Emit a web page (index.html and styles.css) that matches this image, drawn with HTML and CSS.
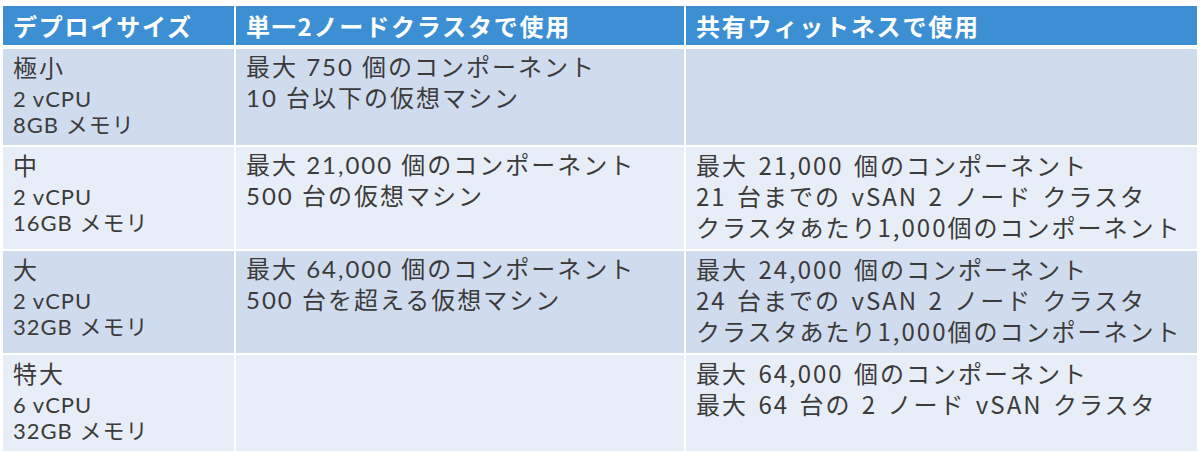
FILE: index.html
```html
<!DOCTYPE html>
<html lang="ja">
<head>
<meta charset="utf-8">
<title>デプロイサイズ</title>
<link rel="stylesheet" href="styles.css">
</head>
<body>
<div class="wrap">
<table class="spec">
  <colgroup>
    <col class="c1"><col class="c2"><col class="c3">
  </colgroup>
  <thead>
    <tr>
      <th>デプロイサイズ</th>
      <th>単一2ノードクラスタで使用</th>
      <th>共有ウィットネスで使用</th>
    </tr>
  </thead>
  <tbody>
    <tr class="odd">
      <td class="size"><div class="name">極小</div><div class="spec-line">2 vCPU</div><div class="spec-line">8GB メモリ</div></td>
      <td class="single"><div>最大 750 個のコンポーネント</div><div>10 台以下の仮想マシン</div></td>
      <td class="shared"></td>
    </tr>
    <tr class="even">
      <td class="size"><div class="name">中</div><div class="spec-line">2 vCPU</div><div class="spec-line">16GB メモリ</div></td>
      <td class="single"><div>最大 21,000 個のコンポーネント</div><div>500 台の仮想マシン</div></td>
      <td class="shared"><div>最大 21,000 個のコンポーネント</div><div>21 台までの vSAN 2 ノード クラスタ</div><div>クラスタあたり1,000個のコンポーネント</div></td>
    </tr>
    <tr class="odd">
      <td class="size"><div class="name">大</div><div class="spec-line">2 vCPU</div><div class="spec-line">32GB メモリ</div></td>
      <td class="single"><div>最大 64,000 個のコンポーネント</div><div>500 台を超える仮想マシン</div></td>
      <td class="shared"><div>最大 24,000 個のコンポーネント</div><div>24 台までの vSAN 2 ノード クラスタ</div><div>クラスタあたり1,000個のコンポーネント</div></td>
    </tr>
    <tr class="even">
      <td class="size"><div class="name">特大</div><div class="spec-line">6 vCPU</div><div class="spec-line">32GB メモリ</div></td>
      <td class="single"></td>
      <td class="shared"><div>最大 64,000 個のコンポーネント</div><div>最大 64 台の 2 ノード vSAN クラスタ</div></td>
    </tr>
  </tbody>
</table>
</div>
</body>
</html>
```

FILE: styles.css
```css
html, body {
  margin: 0;
  padding: 0;
  background: #ffffff;
}

.wrap {
  padding: 4px 1px 0;
}

.spec {
  width: 1198px;
  border-collapse: separate;
  border-spacing: 2px;
  table-layout: fixed;
  font-family: "Lato", "Noto Sans CJK JP", sans-serif;
  color: #3b3b3b;
}

.c1 { width: 231px; }
.c2 { width: 448px; }
.c3 { width: 511px; }

.spec th {
  background: #3d8fd4;
  color: #ffffff;
  font-family: "Noto Sans CJK JP", sans-serif;
  font-weight: 700;
  font-size: 24px;
  letter-spacing: 1.8px;
  line-height: 38px;
  height: 38px;
  padding: 1px 10px 0;
  text-align: left;
  white-space: nowrap;
  border-bottom: 2px solid #ffffff;
  box-sizing: border-box;
}

.spec td {
  vertical-align: top;
  padding: 2px 10px 7px;
  font-size: 24px;
  line-height: 31px;
  letter-spacing: 2px;
  white-space: nowrap;
}

.odd td { background: #cfdcee; }
.even td { background: #e8eef7; }

.size .name {
  font-family: "Noto Sans CJK JP", sans-serif;
  line-height: 31px;
  margin-bottom: 4px;
}

.size .spec-line {
  font-size: 22px;
  line-height: 26px;
  letter-spacing: 1px;
}

.single {
  font-family: "Lato", "Noto Sans CJK JP", sans-serif;
}

.shared {
  font-family: "Noto Sans CJK JP", sans-serif;
  word-spacing: 3px;
}
```
